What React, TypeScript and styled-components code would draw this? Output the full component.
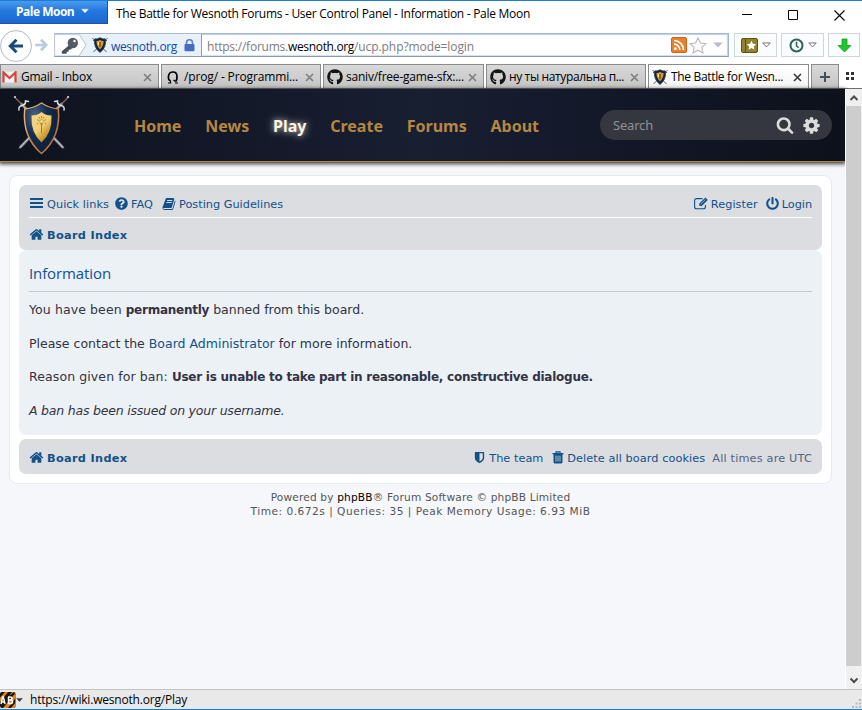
import React from 'react';
import styled, { createGlobalStyle, css } from 'styled-components';
import { FaGithub, FaPowerOff, FaQuestionCircle } from 'react-icons/fa';

const GlobalStyle = createGlobalStyle`
  *, *::before, *::after { box-sizing: border-box; }
  html, body { margin: 0; padding: 0; overflow: hidden; }
  svg { display: block; flex: none; }
`;

const UI_FONT = '"Open Sans", "Noto Sans", sans-serif';
const BODY_FONT = '"DejaVu Sans", Verdana, sans-serif';

const Window = styled.div`
  width: 862px;
  height: 710px;
  display: flex;
  flex-direction: column;
  background: #fff;
  border-top: 1px solid #1a7fd4;
  border-bottom: 1px solid #1a7fd4;
  font-family: ${UI_FONT};
  font-size: 12px;
  color: #000;
  overflow: hidden;
`;

/* Keeps a run of text at a given tracking. */
const Run = styled.span<{ $track?: number }>`
  white-space: pre;
  letter-spacing: ${p => p.$track ?? 0}px;
`;

/* ---------- title bar ---------- */
const TitleBar = styled.header`
  flex: none;
  height: 31px;
  display: flex;
  align-items: flex-start;
`;
const AppButton = styled.button`
  width: 108px;
  height: 23px;
  padding: 0 0 2px 16px;
  display: flex;
  align-items: center;
  gap: 7px;
  border: 1px solid #1c4f9c;
  border-width: 0 1px 1px 0;
  background: linear-gradient(#4a9bee, #2478dd 45%, #1a68d2);
  color: #fff;
  font: 700 12px ${UI_FONT};
`;
const WindowTitle = styled.div`
  flex: 1;
  margin-left: 8px;
  line-height: 25px;
`;
const WindowControls = styled.div`
  display: flex;
  align-items: center;
  gap: 36px;
  height: 28px;
  padding-right: 17px;
`;

/* ---------- navigation bar ---------- */
const NavBar = styled.div`
  flex: none;
  height: 32px;
  display: flex;
  align-items: center;
  padding-bottom: 6px;
`;
const BackButton = styled.button`
  flex: none;
  width: 32px;
  height: 32px;
  margin-top: 1px;
  padding: 0;
  display: flex;
  align-items: center;
  justify-content: center;
  border: 1px solid #b3bcc9;
  border-radius: 50%;
  background: #fcfdfe;
`;
const ForwardButton = styled.div`
  width: 22px;
  padding-right: 4px;
  display: flex;
  justify-content: center;
`;
const UrlBar = styled.div`
  width: 675px;
  height: 24px;
  display: flex;
  align-items: stretch;
  border: 1px solid #a5acb8;
  border-color: #a9b9cd #a2b4c8 #8d99a8 #c6cbd3;
  box-shadow: inset 0 1px 1px #b5d0ee, inset 0 -1px 1px #cfe0f2, inset -1px 0 1px #b9d4ee;
  background: #fff;
`;
const KeyBox = styled.div`
  width: 24px;
  display: flex;
  align-items: center;
  justify-content: flex-end;
`;
const Identity = styled.div`
  width: 123px;
  display: flex;
  align-items: center;
  background: #e8f0f9;
  border-right: 1px solid #7f9fd0;
  color: #0f4da5;
`;
const IdentityName = styled.div`
  width: 67px;
  margin: 2px 6px 0 3px;
`;
const Address = styled.div`
  flex: 1;
  padding-left: 5px;
  line-height: 25px;
  color: #7c7c7c;
`;
const AddressHost = styled(Run)`
  color: #000;
`;
const UrlIcons = styled.div`
  display: flex;
  align-items: center;
  gap: 2px;
  padding-right: 5px;
`;
const ToolButton = styled.button<{ $width: number; $left: number }>`
  flex: none;
  width: ${p => p.$width}px;
  height: 24px;
  margin-left: ${p => p.$left}px;
  padding: 0;
  display: flex;
  align-items: center;
  justify-content: center;
  gap: 4px;
  border: 1px solid #cdd6de;
  background: #fafcfd;
`;

/* ---------- tabs ---------- */
const TabStrip = styled.div`
  flex: none;
  height: 25px;
  display: flex;
  gap: 2px;
  background: #fff;
  border-bottom: 1px solid #6f7073;
`;
const Tab = styled.div<{ $active?: boolean; $width: number }>`
  flex: none;
  width: ${p => p.$width}px;
  padding: 1px 0 0 3px;
  display: flex;
  align-items: center;
  border: 1px solid #8a8b8d;
  border-bottom: 0;
  background: linear-gradient(#d9d9d9, #c4c4c4);
  &:first-child { padding-left: 1px; }
  ${p => p.$active && css`background: linear-gradient(#fff, #f4f4f4);`}
`;
const TabIcon = styled.div<{ $inset?: boolean }>`
  width: 16px;
  padding-left: ${p => (p.$inset ? 2 : 0)}px;
`;
const TabLabel = styled.div`
  flex: 1;
  margin-left: 3px;
  line-height: 22px;
`;
const TabClose = styled.div`
  width: 15px;
`;
const NewTab = styled.div`
  width: 28px;
  display: flex;
  align-items: center;
  justify-content: center;
  border: 1px solid #8a8b8d;
  border-bottom: 0;
  background: linear-gradient(#d9d9d9, #c4c4c4);
`;
const TabGroups = styled.div`
  display: flex;
  align-items: center;
  padding-left: 5px;
`;

/* ---------- page ---------- */
const Viewport = styled.div`
  flex: 1;
  min-height: 0;
  display: flex;
`;
const Page = styled.main`
  width: 845px;
  background: #f5f7fb;
  font-family: ${BODY_FONT};
  font-size: 11.3px;
  color: #536482;
`;
const SiteHeader = styled.div`
  height: 73px;
  display: flex;
  align-items: center;
  padding: 0 12px 0 13px;
  border-bottom: 1px solid #b5803f;
  background: linear-gradient(90deg, #0f131e, #131828 25%, #181f31 50%, #131829 72%, #0d111a);
  box-shadow: 0 1px 4px 1px rgba(0, 0, 0, 0.75);
`;
const SiteNav = styled.nav`
  flex: 1;
  display: flex;
  gap: 23.8px;
  margin: 1px 0 0 64px;
  font: 700 16px/24px "Noto Sans", "Open Sans", sans-serif;
`;
const SiteLink = styled.a<{ $hover?: boolean }>`
  color: #b58742;
  ${p => p.$hover && css`
    color: #fbf3e4;
    text-shadow: 0 0 10px rgba(255, 255, 255, 0.6), 0 0 5px rgba(255, 230, 200, 0.45);
  `}
`;
const SearchBox = styled.div`
  width: 232px;
  height: 30px;
  margin-right: 1px;
  display: flex;
  align-items: center;
  padding: 0 11px 0 13px;
  border-radius: 15px;
  background: #353740;
  color: #8f9095;
  font: 13px/28px "Noto Sans", "Open Sans", sans-serif;
`;
const SearchHint = styled.div`
  flex: 1;
`;
const SearchIcons = styled.div`
  display: flex;
  align-items: center;
  gap: 8px;
`;
const Wrap = styled.div`
  width: 823px;
  height: 309px;
  margin: 13px 0 0 9px;
  padding: 9px;
  border: 1px solid #e6e9ed;
  border-radius: 8px;
  background: #fff;
`;
const Bar = styled.div<{ $height: number }>`
  height: ${p => p.$height}px;
  padding: 0 10px;
  border-radius: 7px;
  background: #dcdde1;
`;
const BarRow = styled.div<{ $height: number; $ruled?: boolean }>`
  height: ${p => p.$height}px;
  display: flex;
  align-items: center;
  padding: ${p => (p.$ruled ? '5px' : '2px')} 0 0 1px;
  ${p => p.$ruled && css`border-bottom: 1px solid #fff;`}
`;
const Spacer = styled.div`
  flex: 1;
`;
const IconLink = styled.a<{ $width?: number; $bold?: boolean }>`
  display: flex;
  align-items: center;
  gap: 3px;
  ${p => p.$width && css`width: ${p.$width}px;`}
  color: #105289;
  font-weight: ${p => (p.$bold ? 700 : 400)};
  line-height: 16px;
  ${p => p.$bold && css`svg { margin: 0 0 1px -1px; }`}
`;
const LinkText = styled(Run)`
  padding-top: 2px;
`;
const Timezone = styled(Run)`
  line-height: 16px;
  padding-top: 2px;
`;
const Panel = styled.section`
  height: 185px;
  margin-bottom: 4px;
  padding: 10px;
  border-radius: 7px;
  background: #ebf1f4;
  color: #333346;
  font-size: 12.5px;
`;
const PanelTitle = styled.h2`
  height: 32px;
  margin: 0 0 9px;
  border-bottom: 1px solid #c5c9cd;
  color: #115098;
  font: 400 15px/27px "Open Sans", sans-serif;
`;
const Paragraph = styled.p`
  margin: 0 0 15.6px;
  line-height: 18px;
`;
const Strong = styled.strong`
  font-size: 12px;
  letter-spacing: -0.25px;
`;
const PanelLink = styled.a`
  color: #105289;
`;
const Copyright = styled.footer`
  width: 841px;
  padding-top: 6px;
  font-size: 10.6px;
  line-height: 14px;
  text-align: center;
  color: #555;
`;
const CopyrightLink = styled.a`
  color: #000;
`;

/* ---------- scroll bar and status bar ---------- */
const ScrollBar = styled.div`
  width: 17px;
  padding: 0 1px;
  display: flex;
  flex-direction: column;
  background: #f0f0f0;
  border-left: 1px solid #fff;
`;
const ScrollArrow = styled.div<{ $height: number }>`
  height: ${p => p.$height}px;
  display: flex;
  align-items: center;
  justify-content: center;
`;
const ScrollThumb = styled.div`
  flex: 1;
  margin: 0 0 0 -1px;
  background: #cdcdcd;
`;
const StatusBar = styled.div`
  flex: none;
  height: 20px;
  display: flex;
  align-items: center;
  border-top: 1px solid #c3c3c3;
  background: #e9e9e9;
`;
const StatusText = styled.div`
  flex: 1;
  margin-left: 7px;
  line-height: 20px;
`;
const Grip = styled.div`
  align-self: flex-end;
  padding: 0 1px 1px 0;
`;

/* ---------- drawings ---------- */
const Glyph = ({ d, size, color = '#105289' }: { d: string; size: number; color?: string }) => (
  <svg width={size} height={size} viewBox="0 0 1792 1792" fill={color}><path d={d} /></svg>
);
const HOME = 'M1472 992v480q0 26-19 45t-45 19h-384v-384h-256v384h-384q-26 0-45-19t-19-45v-480q0-1 .5-3t.5-3l575-474 575 474q1 2 1 6zm223-69l-62 74q-8 9-21 11h-3q-13 0-21-7l-692-577-692 577q-12 8-24 7-13-2-21-11l-62-74q-8-10-7-23.5t11-21.5l719-599q32-26 76-26t76 26l244 204v-195q0-14 9-23t23-9h192q14 0 23 9t9 23v408l219 182q10 8 11 21.5t-7 23.5z';
const BOOK = 'M1703 478q40 57 18 129l-275 906q-19 64-76.5 107.5t-122.5 43.5h-923q-77 0-148.5-53.5t-99.5-131.5q-24-67-2-127 0-4 3-27t4-37q1-8-3-21.5t-3-19.5q2-11 8-21t16.5-23.5 16.5-23.5q23-38 45-91.5t30-91.5q3-10 .5-30t-.5-28q3-11 17-28t17-23q21-36 42-92t25-90q1-9-2.5-32t.5-28q4-13 22-30.5t22-22.5q19-26 42.5-84.5t27.5-96.5q1-8-3-25.5t-2-26.5q2-8 9-18t18-23 17-21q8-12 16.5-30.5t15-35 16-36 19.5-32 26.5-23.5 36-11.5 47.5 5.5l-1 3q38-9 51-9h761q74 0 114 56t18 130l-274 906q-36 119-71.5 153.5t-128.5 34.5h-869q-27 0-38 15-11 16-1 43 24 70 144 70h923q29 0 56-15.5t35-41.5l300-987q7-22 5-57 38 15 59 43zm-1064 2q-4 13 2 22.5t20 9.5h608q13 0 25.5-9.5t16.5-22.5l21-64q4-13-2-22.5t-20-9.5h-608q-13 0-25.5 9.5t-16.5 22.5zm-83 256q-4 13 2 22.5t20 9.5h608q13 0 25.5-9.5t16.5-22.5l21-64q4-13-2-22.5t-20-9.5h-608q-13 0-25.5 9.5t-16.5 22.5z';
const SHIELD = 'M1344 960v-640h-448v1137q119-63 213-137 235-184 235-360zm192-768v768q0 86-33.5 170.5t-83 150-118 127.5-126.5 103-121 77.5-89.5 49.5-42.5 20q-12 6-26 6t-26-6q-16-7-42.5-20t-89.5-49.5-121-77.5-126.5-103-118-127.5-83-150-33.5-170.5v-768q0-26 19-45t45-19h1152q26 0 45 19t19 45z';
const GEAR = 'M1152 896q0-106-75-181t-181-75-181 75-75 181 75 181 181 75 181-75 75-181zm512-109v222q0 12-8 23t-20 13l-185 28q-19 54-39 91 35 50 107 138 10 12 10 25t-9 23q-27 37-99 108t-94 71q-12 0-26-9l-138-108q-44 23-91 38-16 136-29 186-7 28-36 28h-222q-14 0-24.5-8.5t-11.5-21.5l-28-184q-49-16-90-37l-141 107q-10 9-25 9-14 0-25-11-126-114-165-168-7-10-7-23 0-12 8-23 15-21 51-66.5t54-70.5q-27-50-41-99l-183-27q-13-2-21-12.5t-8-23.5v-222q0-12 8-23t19-13l186-28q14-46 39-92-40-57-107-138-10-12-10-24 0-10 9-23 26-36 98.5-107.5t94.5-71.5q13 0 26 10l138 107q44-23 91-38 16-136 29-186 7-28 36-28h222q14 0 24.5 8.5t11.5 21.5l28 184q49 16 90 37l142-107q9-9 24-9 13 0 25 10 129 119 165 170 7 8 7 22 0 12-8 23-15 21-51 66.5t-54 70.5q26 50 41 98l183 28q13 2 21 12.5t8 23.5z';
const SEARCH = 'M1216 832q0-185-131.5-316.5t-316.5-131.5-316.5 131.5-131.5 316.5 131.5 316.5 316.5 131.5 316.5-131.5 131.5-316.5zm512 832q0 52-38 90t-90 38q-54 0-90-38l-343-342q-179 124-399 124-143 0-273.5-55.5t-225-150-150-225-55.5-273.5 55.5-273.5 150-225 225-150 273.5-55.5 273.5 55.5 225 150 150 225 55.5 273.5q0 220-124 399l343 343q37 37 37 90z';

const Bars = () => (
  <svg width="14" height="13" viewBox="0 0 14 13" fill="#105289">
    <path d="M0 1h13v2H0zM0 5h13v2H0zM0 9h13v2H0z" />
  </svg>
);
const EditIcon = () => (
  <svg width="14" height="13" viewBox="0 0 14 13" fill="none" stroke="#105289" strokeWidth="1.1">
    <path d="M8.500 1.600H2.600a2 2 0 0 0-2 2v6.200a2 2 0 0 0 2 2h6.800a2 2 0 0 0 2-2V8" />
    <path d="M5.300 6.600L11.400.6l2.400 2.300-6.100 6H5.300z" fill="#105289" stroke="none" />
    <path d="M6.500 7.300l5-4.900" stroke="#dcdde1" strokeWidth=".6" />
  </svg>
);
const TrashIcon = () => (
  <svg width="12" height="13" viewBox="0 0 12 13">
    <path d="M4 2V.9h4V2" fill="none" stroke="#105289" strokeWidth="1.1" />
    <path d="M.5 2h11v1.300h-1V11q0 1.400-1.200 1.400H2.700Q1.500 12.400 1.500 11V3.300h-1z" fill="#105289" />
    <path d="M4 4.700v5.800M6 4.700v5.800M8 4.700v5.800" stroke="#dcdde1" strokeWidth=".8" />
  </svg>
);
const Caret = ({ color, w = 9, outline }: { color: string; w?: number; outline?: boolean }) => (
  <svg width={w} height="6" viewBox="0 0 10 6">
    <path d="M.8.7h8.400L5 5.200z" fill={outline ? '#fff' : color} stroke={color} strokeWidth={outline ? 1 : 0.5} />
  </svg>
);
const Cross = ({ color }: { color: string }) => (
  <svg width="9" height="9" viewBox="0 0 9 9"><path d="M1 1l7 7M8 1L1 8" stroke={color} strokeWidth="1.500" /></svg>
);
const Crest = ({ width, height }: { width: number; height: number }) => (
  <svg width={width} height={height} viewBox="0 0 56 60">
    <defs>
      <linearGradient id="gold" x1="0" y1="0" x2=".7" y2="1">
        <stop offset="0" stopColor="#f5d78f" /><stop offset=".55" stopColor="#f0cf72" /><stop offset="1" stopColor="#b77a0c" />
      </linearGradient>
      <linearGradient id="rim" x1="0" y1="0" x2="1" y2="1">
        <stop offset="0" stopColor="#e9bd82" /><stop offset=".5" stopColor="#c98a45" /><stop offset="1" stopColor="#a9642d" />
      </linearGradient>
      <radialGradient id="field" cx=".3" cy=".25" r=".8">
        <stop offset="0" stopColor="#4d6282" /><stop offset=".45" stopColor="#172e50" /><stop offset="1" stopColor="#0b1c36" />
      </radialGradient>
    </defs>
    <g strokeLinecap="round" fill="none">
      <path d="M1 2L7 8M55 2L49 8" stroke="#7d5f55" strokeWidth="1.600" />
      <path d="M8 9L49 52M48 9L7 52" stroke="#85858a" strokeWidth="2.600" />
      <path d="M9 10L50 53M47 10L6 53" stroke="#d5d5da" strokeWidth=".9" />
      <path d="M5.500 15q-1-3.500 3-4.500 4-1 3.500-4.500l3 .5M50.500 15q1-3.500-3-4.500-4-1-3.500-4.500l-3 .5" stroke="#dedede" strokeWidth="1.500" />
      <circle cx="1.500" cy="2" r="1" fill="#ddd" /><circle cx="54.500" cy="2" r="1" fill="#ddd" />
    </g>
    <path d="M28 8Q35.500 13 44.800 14 47.500 42 28 58.500 8.500 42 11.200 14 20.500 13 28 8z" fill="url(#field)" stroke="url(#rim)" strokeWidth="1.500" />
    <path d="M28 17q4 3.500 10 3.500 1 17-10 27-11-10-10-27 6 0 10-3.500z" fill="url(#gold)" />
    <g stroke="#a9762c" strokeWidth=".9" fill="none">
      <path d="M28 27v11M26.500 29h3M23.500 29l1.300-.8M32.500 29l-1.300-.8M23.500 24.500l1.700 1M32.500 24.500l-1.700 1M25.500 22l.8 1.700M30.500 22l-.8 1.700M28 21v2" />
      <circle cx="28" cy="26.500" r="1.800" stroke="#c08c36" fill="#fbeaae" />
    </g>
  </svg>
);
const MiniCrest = () => (
  <svg width="16" height="16" viewBox="0 0 16 16">
    <path d="M.5 1l14 14M15.500 1l-14 14M1 4l2.500-2.500M15 4l-2.500-2.500" stroke="#4a5a70" strokeWidth="1" />
    <path d="M8 .8q2.500 1.400 5.500 1.400Q14.500 10.500 8 15.500 1.500 10.500 2.500 2.200 5.500 2.200 8 .8z" fill="#10233f" stroke="#2b3a4c" strokeWidth=".8" />
    <path d="M8 3q1.500 1 3.500 1 .5 4.500-3.500 8.500Q4 8.500 4.500 4 6.500 4 8 3z" fill="#d99a2b" />
    <path d="M8 5v5" stroke="#5e3c0d" strokeWidth="1.200" /><path d="M6.500 5v3" stroke="#ffe9a8" strokeWidth="1" />
  </svg>
);
const Arrow = ({ flip, color, size }: { flip?: boolean; color: string; size: number }) => (
  <svg width={size} height={size} viewBox="0 0 16 16">
    <path d={flip ? 'M1.500 8h12M8 2l6 6-6 6' : 'M15 8H3M8.500 1.800L2.300 8l6.200 6.200'} fill="none" stroke={color} strokeWidth="3" />
  </svg>
);
const KeyIcon = () => (
  <svg width="18" height="17" viewBox="0 0 18 17">
    <path d="M10 7.500L1.500 14.500v1.500h3.500v-2h2v-2h2l2.500-2z" fill="#4b4f57" stroke="#4b4f57" strokeWidth="1.300" />
    <circle cx="11.800" cy="6" r="5.200" fill="#555a63" /><circle cx="13.500" cy="4" r="1.200" fill="#fff" />
  </svg>
);
const Chevron = () => (
  <svg width="9" height="22" viewBox="0 0 9 22"><path d="M0 0l7 11-7 11z" fill="#fff" /><path d="M0 0l7 11-7 11" fill="none" stroke="#b9c0c8" /></svg>
);
const Lock = () => (
  <svg width="11" height="13" viewBox="0 0 11 13">
    <path d="M2.500 6V3.800a3 3 0 0 1 6 0V6" fill="none" stroke="#5a7ac6" strokeWidth="1.600" />
    <rect x=".5" y="5" width="10" height="7.300" rx="1" fill="#4a6cc0" />
  </svg>
);
const Feed = () => (
  <svg width="16" height="16" viewBox="0 0 16 16">
    <rect x=".5" y=".5" width="15" height="15" rx="1.500" fill="#e9812c" stroke="#cf6416" />
    <path d="M3 7.200a5.800 5.800 0 0 1 5.800 5.800M3 3.500a9.500 9.500 0 0 1 9.500 9.500" fill="none" stroke="#fff" strokeWidth="1.700" />
    <circle cx="4.300" cy="11.700" r="1.400" fill="#fff" />
  </svg>
);
const Star = () => (
  <svg width="18" height="17" viewBox="0 0 18 17">
    <path d="M9 .8l2.400 5.200 5.600.6-4.200 3.800 1.200 5.600L9 13.200 4 16l1.200-5.600L1 6.600 6.600 6z" fill="#fcfcfc" stroke="#b8babd" strokeWidth="1.100" />
  </svg>
);
const Bookmarks = () => (
  <svg width="17" height="15" viewBox="0 0 17 15">
    <rect x=".5" y=".5" width="16" height="14" rx="1.500" fill="#8f8330" stroke="#5b5318" />
    <path d="M4.500 1v13" stroke="#5b5318" />
    <path d="M10.500 2.800l1.400 3 3.300.4-2.400 2.300.6 3.200-2.900-1.600-2.900 1.600.6-3.200-2.400-2.300 3.300-.4z" fill="#fff" />
  </svg>
);
const Clock = () => (
  <svg width="15" height="15" viewBox="0 0 15 15">
    <circle cx="7.500" cy="7.500" r="6" fill="#f4faf7" stroke="#2f6155" strokeWidth="2" />
    <path d="M7.500 3.800v4l2 1.900" fill="none" stroke="#2f6155" strokeWidth="1.500" />
  </svg>
);
const DownArrow = () => (
  <svg width="15" height="15" viewBox="0 0 15 15"><path d="M5 1h5v6.500h4L7.500 14 1 7.500h4z" fill="#1fc72b" stroke="#129d23" strokeWidth=".8" /></svg>
);
const Gmail = () => (
  <svg width="16" height="12" viewBox="0 0 16 12">
    <rect x="1" y=".5" width="13" height="11" rx="1" fill="#f3f1f1" />
    <path d="M1.500 11.500V1.500l6 5.500 6-5.500v10" fill="none" stroke="#d5453b" strokeWidth="2.200" />
  </svg>
);
const BoardMark = () => (
  <svg width="12" height="13" viewBox="0 0 12 13">
    <path d="M3.500 9.500Q1 9.500 1.500 5 2 1 6 1t4 4.500q0 4-1.500 5" fill="none" stroke="#000" strokeWidth="1.700" />
    <path d="M3.500 9.500V12H1M8.500 10.500l-2-1.500M8 12h3" fill="none" stroke="#000" strokeWidth="1.200" />
  </svg>
);
const BlockerBadge = () => (
  <svg width="16" height="16" viewBox="0 0 16 16">
    <rect width="15.500" height="16" rx="2" fill="#1b1511" />
    <path d="M-1 7L5 0h3L0 10zM3 16L15.500 1v5L8 16zM11 16l5-6v4l-1.500 2zM9 4l3-4h2z" fill="#e98419" />
    <g fill="none" stroke="#fff" strokeWidth="1.500"><path d="M1 12l1.700-7h.6L5 12M1.500 10H5M8.500 5v6.500h2q2 0 2-1.800T10.500 8H9h1q2 0 2-1.500T10 5H8z" /></g>
  </svg>
);

/* ---------- data ---------- */
const TABS = [
  { icon: <Gmail />, label: 'Gmail - Inbox', track: -0.25, width: 159 },
  { icon: <BoardMark />, label: '/prog/ - Programmi...', track: -0.14, width: 160, inset: true },
  { icon: <FaGithub size={16} color="#151515" />, label: 'saniv/free-game-sfx:...', track: -0.22, width: 161 },
  { icon: <FaGithub size={16} color="#151515" />, label: 'ну ты натуральна п...', track: -0.37, width: 160 },
  { icon: <MiniCrest />, label: 'The Battle for Wesn...', track: -0.33, width: 161, active: true },
];
const SITE_LINKS = ['Home', 'News', 'Play', 'Create', 'Forums', 'About'];

export default function App() {
  return (
    <>
      <GlobalStyle />
      <Window>
        <TitleBar>
          <AppButton><Run $track={-0.5}>Pale Moon</Run><Caret color="#fff" w={8} /></AppButton>
          <WindowTitle>
            <Run $track={-0.282}>The Battle for Wesnoth Forums - User Control Panel - Information - Pale Moon</Run>
          </WindowTitle>
          <WindowControls>
            <svg width="10" height="11" viewBox="0 0 10 11"><path d="M0 4.500h10" stroke="#000" /></svg>
            <svg width="10" height="10" viewBox="0 0 10 10"><path d="M.5.5h9v9h-9z" fill="none" stroke="#000" /></svg>
            <svg width="11" height="11" viewBox="0 0 11 11"><path d="M.5.5l10 10M10.500.5l-10 10" stroke="#000" strokeWidth="1.100" /></svg>
          </WindowControls>
        </TitleBar>

        <NavBar>
          <BackButton><Arrow color="#1f4a75" size={16} /></BackButton>
          <ForwardButton><Arrow flip color="#b3cbe0" size={14} /></ForwardButton>
          <UrlBar>
            <KeyBox><KeyIcon /></KeyBox>
            <Identity>
              <Chevron />
              <svg width="4" height="1" />
              <MiniCrest />
              <IdentityName><Run $track={-0.34}>wesnoth.org</Run></IdentityName>
              <Lock />
            </Identity>
            <Address>
              <Run $track={-0.229}>https://forums.</Run>
              <AddressHost $track={-0.34}>wesnoth.org</AddressHost>
              <Run $track={-0.087}>/ucp.php?mode=login</Run>
            </Address>
            <UrlIcons><Feed /><Star /><svg width="2" height="1" /><Caret color="#b4bfcb" w={10} /></UrlIcons>
          </UrlBar>
          <ToolButton $width={43} $left={5}><Bookmarks /><Caret color="#666" outline /></ToolButton>
          <ToolButton $width={43} $left={4}><Clock /><Caret color="#666" outline /></ToolButton>
          <ToolButton $width={32} $left={4}><DownArrow /></ToolButton>
        </NavBar>

        <TabStrip>
          {TABS.map(t => (
            <Tab key={t.label} $width={t.width} $active={t.active}>
              <TabIcon $inset={t.inset}>{t.icon}</TabIcon>
              <TabLabel><Run $track={t.track}>{t.label}</Run></TabLabel>
              <TabClose><Cross color={t.active ? '#333' : '#7b7b7b'} /></TabClose>
            </Tab>
          ))}
          <NewTab>
            <svg width="12" height="12" viewBox="0 0 12 12"><path d="M6 1v10M1 6h10" stroke="#46505c" strokeWidth="2" /></svg>
          </NewTab>
          <TabGroups>
            <svg width="9" height="8" viewBox="0 0 9 8" fill="#333"><path d="M0 0h3v3H0zM5 0h3v3H5zM0 5h3v3H0zM5 5h3v3H5z" /></svg>
          </TabGroups>
        </TabStrip>

        <Viewport>
          <Page>
            <SiteHeader>
              <Crest width={57} height={60} />
              <SiteNav>
                {SITE_LINKS.map(name => <SiteLink key={name} $hover={name === 'Play'}>{name}</SiteLink>)}
              </SiteNav>
              <SearchBox>
                <SearchHint><Run $track={-0.19}>Search</Run></SearchHint>
                <SearchIcons>
                  <Glyph d={SEARCH} size={18} color="#dcdcdc" />
                  <Glyph d={GEAR} size={19} color="#dcdcdc" />
                </SearchIcons>
              </SearchBox>
            </SiteHeader>

            <Wrap>
              <Bar $height={65}>
                <BarRow $height={33} $ruled>
                  <IconLink $width={85}><Bars /><LinkText $track={0.05}>Quick links</LinkText></IconLink>
                  <IconLink $width={47}><FaQuestionCircle size={13} /><LinkText>FAQ</LinkText></IconLink>
                  <IconLink><Glyph d={BOOK} size={14} /><LinkText>Posting Guidelines</LinkText></IconLink>
                  <Spacer />
                  <IconLink $width={72}><EditIcon /><LinkText $track={0.05}>Register</LinkText></IconLink>
                  <IconLink><FaPowerOff size={13} /><LinkText $track={-0.06}>Login</LinkText></IconLink>
                </BarRow>
                <BarRow $height={31}>
                  <IconLink $bold><Glyph d={HOME} size={15} /><LinkText $track={0.32}>Board Index</LinkText></IconLink>
                </BarRow>
              </Bar>

              <Panel>
                <PanelTitle><Run $track={-0.106}>Information</Run></PanelTitle>
                <Paragraph><Run $track={0.1}>You have been </Run><Strong>permanently</Strong><Run> banned from this board.</Run></Paragraph>
                <Paragraph><Run>Please contact the <PanelLink>Board Administrator</PanelLink> for more information.</Run></Paragraph>
                <Paragraph><Run $track={0.1}>Reason given for ban: </Run><Strong>User is unable to take part in reasonable, constructive dialogue.</Strong></Paragraph>
                <Paragraph><em><Run $track={-0.21}>A ban has been issued on your username.</Run></em></Paragraph>
              </Panel>

              <Bar $height={35}>
                <BarRow $height={35}>
                  <IconLink $bold><Glyph d={HOME} size={15} /><LinkText $track={0.32}>Board Index</LinkText></IconLink>
                  <Spacer />
                  <IconLink $width={79}><Glyph d={SHIELD} size={13} /><LinkText $track={0.03}>The team</LinkText></IconLink>
                  <IconLink $width={160}><TrashIcon /><LinkText $track={0.07}>Delete all board cookies</LinkText></IconLink>
                  <Timezone $track={0.17}>All times are UTC</Timezone>
                </BarRow>
              </Bar>
            </Wrap>

            <Copyright>
              <div><Run $track={0.16}>Powered by <CopyrightLink>phpBB</CopyrightLink>® Forum Software © phpBB Limited</Run></div>
              <div><Run $track={0.5}>Time: 0.672s | Queries: 35 | Peak Memory Usage: 6.93 MiB</Run></div>
            </Copyright>
          </Page>

          <ScrollBar>
            <ScrollArrow $height={17}>
              <svg width="10" height="8" viewBox="0 0 10 8"><path d="M1.500 6L5 2.500 8.500 6" fill="none" stroke="#4d4d4d" strokeWidth="2" /></svg>
            </ScrollArrow>
            <ScrollThumb />
            <ScrollArrow $height={23}>
              <svg width="10" height="16" viewBox="0 0 10 16"><path d="M1.500 8.500L5 12l3.500-3.500" fill="none" stroke="#4d4d4d" strokeWidth="2" /></svg>
            </ScrollArrow>
          </ScrollBar>
        </Viewport>

        <StatusBar>
          <BlockerBadge />
          <Caret color="#333" w={7} />
          <StatusText><Run $track={-0.2}>https://wiki.wesnoth.org/Play</Run></StatusText>
          <Grip>
            <svg width="9" height="9" viewBox="0 0 9 9" fill="#b9b9b9"><path d="M7 0h2v2H7zM7 3.500h2v2H7zM3.500 3.500h2v2h-2zM7 7h2v2H7zM3.500 7h2v2h-2zM0 7h2v2H0z" /></svg>
          </Grip>
        </StatusBar>
      </Window>
    </>
  );
}
